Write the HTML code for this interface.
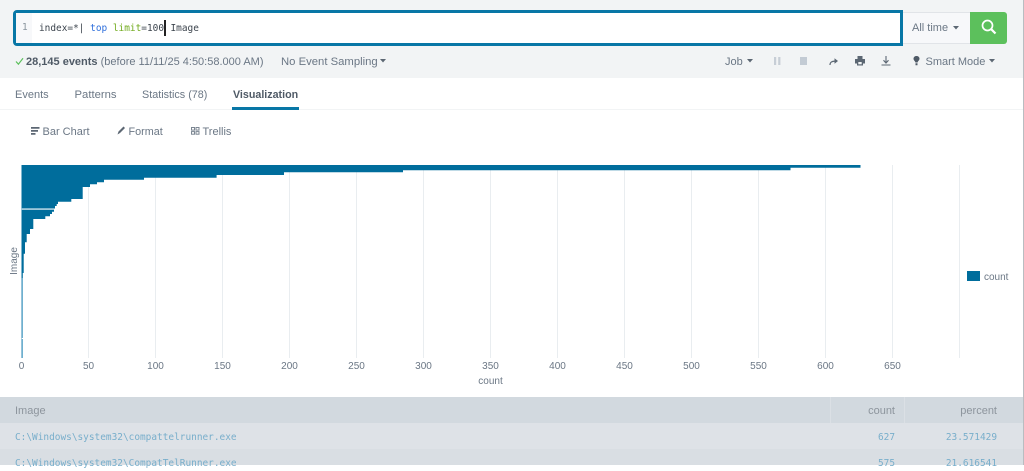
<!DOCTYPE html>
<html><head><meta charset="utf-8"><style>
html,body{margin:0;padding:0;background:#fff}
body{width:1024px;height:465px;position:relative;overflow:hidden;font-family:"Liberation Sans",sans-serif;color:#6b7785;font-size:11px}
.a{position:absolute;white-space:nowrap;line-height:14px}
.m{font-family:"DejaVu Sans Mono","Liberation Mono",monospace;font-size:9.45px}
.b{position:absolute}
svg{position:absolute;overflow:visible}
.t{position:absolute;white-space:nowrap;line-height:12px;font-size:10px;color:#6b7785;transform:translateX(-50%);top:361px}
</style></head><body>
<div class="b" style="left:0;top:0;width:1024px;height:78px;background:#f2f4f5"></div>
<div class="b" style="left:902px;top:12px;width:68px;height:32px;background:#f7f8fa;border-top:1px solid #e1e4e8;border-bottom:1px solid #e1e4e8;box-sizing:border-box"></div>
<div class="b" style="left:970px;top:12px;width:37px;height:32px;background:#5cc05c;border-radius:0 3px 3px 0"></div>
<div class="b" style="left:13px;top:10px;width:890px;height:36px;box-sizing:border-box;border:3px solid #0877a6;border-radius:4px 0 0 4px;background:#fff"></div>
<div class="b" style="left:16px;top:13px;width:16px;height:30px;background:#f7f8fa"></div>
<div class="a m" style="left:22px;top:21px;color:#8a949e">1</div>
<div class="a m" style="left:39px;top:21.5px;color:#3c444d">index=*| <span style="color:#2f6fdc">top</span> <span style="color:#72ab1e">limit</span>=100</div>
<div class="b" style="left:164px;top:20px;width:1.5px;height:16px;background:#222"></div>
<div class="a m" style="left:170.5px;top:21.5px;color:#3c444d">Image</div>
<div class="a" style="left:912px;top:20.5px;color:#6b7785">All time</div>
<svg style="left:953px;top:25.5px" width="6" height="4"><path d="M0 0H6L3 3.5Z" fill="#5c6773"/></svg>
<svg style="left:981px;top:19px" width="16" height="16"><circle cx="6.5" cy="6.5" r="5" fill="none" stroke="#fff" stroke-width="1.7"/><path d="M10.2 10.2L14.5 14.5" stroke="#fff" stroke-width="2.2"/></svg>

<svg style="left:15px;top:57px" width="9" height="9"><path d="M1 4.5L3.4 7.2L8 1.2" fill="none" stroke="#5cc05c" stroke-width="1.2"/></svg>
<div class="a" style="left:26px;top:54.5px"><b style="color:#4f5a66">28,145 events</b> (before 11/11/25 4:50:58.000 AM)</div>
<div class="a" style="left:281px;top:54.5px;font-size:11.3px">No Event Sampling</div>
<svg style="left:380px;top:59px" width="6" height="4"><path d="M0 0H6L3 3.5Z" fill="#5c6773"/></svg>
<div class="a" style="left:725px;top:54.5px">Job</div>
<svg style="left:747px;top:59px" width="6" height="4"><path d="M0 0H6L3 3.5Z" fill="#5c6773"/></svg>
<svg style="left:774px;top:57px" width="7" height="9"><path d="M0 0H2.2V8H0ZM4.2 0H6.4V8H4.2Z" fill="#c7ced6"/></svg>
<div class="b" style="left:800px;top:57px;width:7px;height:8px;background:#c3cbd4"></div>
<svg style="left:829px;top:57px" width="10" height="9"><path d="M1 8C1 5 3 4 8 4" fill="none" stroke="#5c6773" stroke-width="1.2"/><path d="M5.5 1.2L9 4L5.5 6.8Z" fill="#5c6773"/></svg>
<svg style="left:855px;top:56px" width="10" height="10"><path d="M2.5 0H7.5V3H10V7.5H8V9.5H2V7.5H0V3H2.5Z" fill="#5c6773"/><path d="M3.3 6H6.7V8.3H3.3Z" fill="#f2f4f5"/></svg>
<svg style="left:881px;top:56px" width="10" height="10"><path d="M5 0V6.5M2.5 4.2L5 7L7.5 4.2M0.5 9H9.5" fill="none" stroke="#5c6773" stroke-width="1.1"/></svg>
<svg style="left:913px;top:56px" width="7" height="10"><path d="M3.5 0C5.5 0 6.5 1.3 6.5 2.8C6.5 4.2 5 5 4.6 6.5H2.4C2 5 .5 4.2 .5 2.8C.5 1.3 1.5 0 3.5 0ZM2.5 7.3H4.5V9.3H2.5Z" fill="#4f5a66"/></svg>
<div class="a" style="left:925.5px;top:54.5px">Smart Mode</div>
<svg style="left:989px;top:59px" width="6" height="4"><path d="M0 0H6L3 3.5Z" fill="#5c6773"/></svg>

<div class="a" style="left:15px;top:87.5px">Events</div>
<div class="a" style="left:74.5px;top:87.5px;font-size:11.3px">Patterns</div>
<div class="a" style="left:142px;top:87.5px;font-size:10.8px">Statistics (78)</div>
<div class="a" style="left:233px;top:87.5px;font-weight:bold;color:#4f5a66;font-size:10.7px">Visualization</div>
<div class="b" style="left:0;top:109px;width:1024px;height:1px;background:#f2f4f5"></div>
<div class="b" style="left:232px;top:107px;width:67px;height:2.5px;background:#0877a6"></div>

<svg style="left:31px;top:127px" width="9" height="8"><path d="M0 0H8.5V1.8H0ZM0 3H7V4.8H0ZM0 6H4.5V7.8H0Z" fill="#5c6773"/></svg>
<div class="a" style="left:42.5px;top:124.5px">Bar Chart</div>
<svg style="left:117px;top:126px" width="9" height="9"><path d="M0.5 8.5L1.5 5.5L6.5 .5L8 2L3 7Z" fill="#5c6773"/></svg>
<div class="a" style="left:128.5px;top:124.5px;font-size:10.8px">Format</div>
<svg style="left:191px;top:127px" width="9" height="8" fill="none" stroke="#7b8692" stroke-width="1"><rect x=".5" y=".5" width="3" height="2.6"/><rect x="5" y=".5" width="3" height="2.6"/><rect x=".5" y="4.6" width="3" height="2.6"/><rect x="5" y="4.6" width="3" height="2.6"/></svg>
<div class="a" style="left:202.5px;top:124.5px">Trellis</div>

<svg style="left:0;top:0" width="1024" height="465">
<g stroke="#e9edf0" stroke-width="1">
<path d="M88.5 165V358M155.5 165V358M222.5 165V358M289.5 165V358M356.5 165V358M423.5 165V358M490.5 165V358M557.5 165V358M624.5 165V358M691.5 165V358M758.5 165V358M825.5 165V358M892.5 165V358M959.5 165V358"/>
</g>
<path fill="#006d9c" d="M21.5 165H860.5V167.7H790.5V170.3H403V172.3H284V175H216.6V177.7H144V179.7H104V182.3H97V184.3H90V187H82.7V199H71.3V201.7H58V204H56.7V206H55V208.5H21.5Z"/>
<path fill="#006d9c" d="M21.5 209.6H54V211.7H52V214H50V216.3H45.3V219H33.3V229H30V234H26.7V242.3H25V253.7H23.7V273H22.8V278H21.5Z"/>
<path fill="#6fb0cf" d="M21.5 278H23V338H21.5ZM21.5 339H23V358H21.5Z"/>
<path d="M21.5 165V358" stroke="#7fb6d1" stroke-width=".6" fill="none"/>
<rect x="967" y="271" width="13" height="10" fill="#006d9c"/>
</svg>
<div class="t" style="left:21.5px">0</div><div class="t" style="left:88.5px">50</div><div class="t" style="left:155.5px">100</div><div class="t" style="left:222.5px">150</div><div class="t" style="left:289.5px">200</div><div class="t" style="left:356.5px">250</div><div class="t" style="left:423.5px">300</div><div class="t" style="left:490.5px">350</div><div class="t" style="left:557.5px">400</div><div class="t" style="left:624.5px">450</div><div class="t" style="left:691.5px">500</div><div class="t" style="left:758.5px">550</div><div class="t" style="left:825.5px">600</div><div class="t" style="left:892.5px">650</div>
<div class="t" style="left:490.5px;top:376px">count</div>
<div class="a" style="left:984px;top:270.5px;font-size:10px">count</div>
<div class="a" style="left:14.5px;top:261px;font-size:10px;transform:translate(-50%,-50%) rotate(-90deg)">Image</div>

<div class="b" style="left:0;top:397px;width:1023px;height:26px;background:#d2d9df"></div>
<div class="b" style="left:830px;top:397px;width:1px;height:26px;background:#dbe0e5"></div>
<div class="b" style="left:904px;top:397px;width:1px;height:26px;background:#dbe0e5"></div>
<div class="b" style="left:0;top:423px;width:1023px;height:26px;background:#dee2e7"></div>
<div class="b" style="left:0;top:449px;width:1023px;height:16px;background:#d9dee3"></div>
<div class="a" style="left:15px;top:403.5px;color:#8d959d">Image</div>
<div class="a" style="right:129px;top:403.5px;color:#8d959d">count</div>
<div class="a" style="right:27px;top:403.5px;color:#8d959d">percent</div>
<div class="a m" style="left:15px;top:430.5px;color:#78aecb">C:\Windows\system32\compattelrunner.exe</div>
<div class="a m" style="right:129px;top:430.5px;color:#78aecb">627</div>
<div class="a m" style="right:27px;top:430.5px;color:#78aecb">23.571429</div>
<div class="a m" style="left:15px;top:456.5px;color:#78aecb">C:\Windows\system32\CompatTelRunner.exe</div>
<div class="a m" style="right:129px;top:456.5px;color:#78aecb">575</div>
<div class="a m" style="right:27px;top:456.5px;color:#78aecb">21.616541</div>
<div class="b" style="left:1023px;top:0;width:1px;height:465px;background:#b9bdc1"></div>
</body></html>
